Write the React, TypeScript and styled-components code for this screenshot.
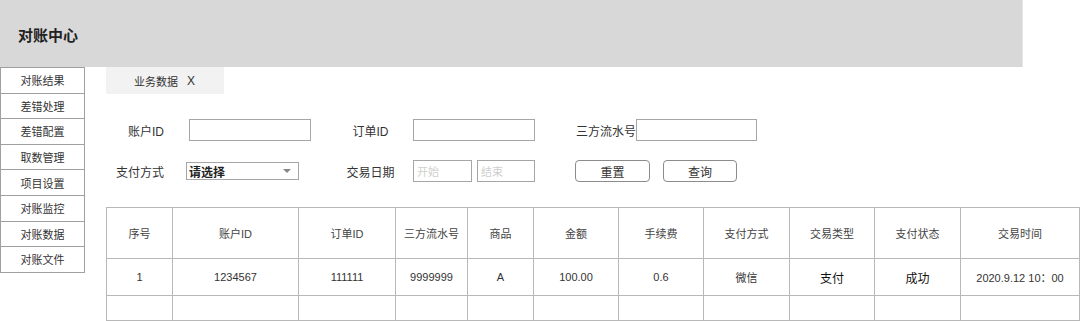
import styled, { createGlobalStyle } from 'styled-components'

const menus = ['对账结果', '差错处理', '差错配置', '取数管理', '项目设置', '对账监控', '对账数据', '对账文件']

const columns = [
  { title: '序号', width: 66 },
  { title: '账户ID', width: 126 },
  { title: '订单ID', width: 97 },
  { title: '三方流水号', width: 72 },
  { title: '商品', width: 66 },
  { title: '金额', width: 85 },
  { title: '手续费', width: 85 },
  { title: '支付方式', width: 86 },
  { title: '交易类型', width: 85 },
  { title: '支付状态', width: 86 },
  { title: '交易时间', width: 119 },
]

const rows = [
  [
    { text: '1' },
    { text: '1234567' },
    { text: '111111' },
    { text: '9999999' },
    { text: 'A' },
    { text: '100.00' },
    { text: '0.6' },
    { text: '微信' },
    { text: '支付', strong: true },
    { text: '成功', strong: true },
    { text: '2020.9.12 10：00' },
  ],
]

export default function App() {
  return (
    <>
      <GlobalStyle />
      <Page>
        <Header>
          <Title>对账中心</Title>
        </Header>
        <Body>
          <Sidebar>
            {menus.map((m) => (
              <MenuItem key={m}>{m}</MenuItem>
            ))}
          </Sidebar>
          <Main>
            <TabBar>
              <Tab>
                业务数据<TabClose>X</TabClose>
              </Tab>
            </TabBar>

            <Form>
              <Label align="right">账户ID</Label>
              <Cell>
                <Input offset={3} width={122} />
              </Cell>
              <Label align="center">订单ID</Label>
              <Cell>
                <Input width={122} />
              </Cell>
              <Cell offset={16}>
                <InlineLabel>三方流水号</InlineLabel>
                <Input width={121} />
              </Cell>

              <Label align="right">支付方式</Label>
              <Cell>
                <Select>
                  请选择
                  <Caret />
                </Select>
              </Cell>
              <Label align="center">交易日期</Label>
              <Cell gap={5}>
                <Input width={59}>
                  <Placeholder>开始</Placeholder>
                </Input>
                <Input width={58}>
                  <Placeholder>结束</Placeholder>
                </Input>
              </Cell>
              <Cell offset={15} gap={13}>
                <Button width={75}>重置</Button>
                <Button width={74}>查询</Button>
              </Cell>
            </Form>

            <Table>
              <colgroup>
                {columns.map((c) => (
                  <col key={c.title} style={{ width: c.width }} />
                ))}
              </colgroup>
              <thead>
                <tr>
                  {columns.map((c) => (
                    <Th key={c.title}>{c.title}</Th>
                  ))}
                </tr>
              </thead>
              <tbody>
                {rows.map((r, i) => (
                  <DataRow key={i}>
                    {r.map((c, j) => (
                      <Td key={j} strong={c.strong}>
                        {c.text}
                      </Td>
                    ))}
                  </DataRow>
                ))}
                <EmptyRow>
                  {columns.map((c) => (
                    <Td key={c.title} />
                  ))}
                </EmptyRow>
              </tbody>
            </Table>
          </Main>
        </Body>
      </Page>
    </>
  )
}

const GlobalStyle = createGlobalStyle`
  html, body {
    margin: 0;
    padding: 0;
    background: #fff;
  }
  body {
    font-family: "Liberation Sans", "Noto Sans CJK SC", sans-serif;
    color: #333;
  }
`

const Page = styled.div`
  width: 1080px;
  height: 321px;
  overflow: hidden;
`

const Header = styled.div`
  width: 1023px;
  height: 67px;
  background: #d8d8d8;
  border-right: 1px solid #e6e6e6;
  display: flex;
  align-items: center;
  padding-left: 18px;
  box-sizing: border-box;
`

const Title = styled.div`
  font-size: 15px;
  font-weight: 700;
  color: #222;
  margin-top: 1px;
`

const Body = styled.div`
  display: flex;
  align-items: flex-start;
`

const Sidebar = styled.div`
  width: 85px;
  box-sizing: border-box;
  border: 1px solid #a0a0a0;
  border-bottom: none;
  flex-shrink: 0;
`

const MenuItem = styled.div`
  height: 24.6px;
  border-bottom: 1px solid #a0a0a0;
  display: flex;
  align-items: center;
  justify-content: center;
  font-size: 11px;
  color: #333;
`

const Main = styled.div`
  flex: 1;
  padding-left: 21px;
`

const TabBar = styled.div`
  display: flex;
`

const Tab = styled.div`
  width: 118px;
  height: 27px;
  background: #f2f2f2;
  display: flex;
  align-items: center;
  padding-left: 28px;
  box-sizing: border-box;
  font-size: 11px;
  color: #333;
`

const TabClose = styled.span`
  margin-left: 9px;
  font-size: 12px;
`

const Form = styled.div`
  display: grid;
  grid-template-columns: 80px 154px 73px 147px auto;
  grid-auto-rows: 22px;
  row-gap: 19px;
  margin-top: 25px;
  align-items: center;
`

const Label = styled.div<{ align: 'right' | 'center' }>`
  font-size: 12px;
  color: #333;
  text-align: ${({ align }) => align};
  padding-right: ${({ align }) => (align === 'right' ? '22px' : '12px')};
  white-space: nowrap;
`

const InlineLabel = styled.span`
  font-size: 12px;
  color: #333;
  white-space: nowrap;
`

const Cell = styled.div<{ offset?: number; gap?: number }>`
  display: flex;
  align-items: center;
  padding-left: ${({ offset }) => offset || 0}px;
  gap: ${({ gap }) => gap || 0}px;
  height: 22px;
`

const Input = styled.div<{ width: number; offset?: number }>`
  width: ${({ width }) => width}px;
  height: 22px;
  margin-left: ${({ offset }) => offset || 0}px;
  border: 1px solid #a6a6a6;
  box-sizing: border-box;
  display: flex;
  align-items: center;
  padding-left: 3px;
`

const Placeholder = styled.span`
  font-size: 11px;
  color: #cfcfcf;
`

const Select = styled.div`
  width: 113px;
  height: 18px;
  border: 1px solid #a6a6a6;
  box-sizing: border-box;
  display: flex;
  align-items: center;
  justify-content: space-between;
  padding: 0 7px 0 2px;
  font-size: 12px;
  font-weight: 700;
  color: #222;
`

const Caret = styled.span`
  width: 0;
  height: 0;
  border-left: 4px solid transparent;
  border-right: 4px solid transparent;
  border-top: 4px solid #888;
`

const Button = styled.div<{ width: number }>`
  width: ${({ width }) => width}px;
  height: 22px;
  border: 1px solid #8c8c8c;
  border-radius: 4px;
  box-sizing: border-box;
  display: flex;
  align-items: center;
  justify-content: center;
  font-size: 12px;
  color: #333;
`

const Table = styled.table`
  margin-top: 25px;
  border-collapse: collapse;
  table-layout: fixed;
  width: 974px;
  border: 1px solid #b8b8b8;
`

const Th = styled.th`
  height: 50px;
  border: 1px solid #b8b8b8;
  font-size: 11px;
  font-weight: 400;
  color: #444;
  text-align: center;
  padding: 0;
`

const DataRow = styled.tr`
  height: 37px;
`

const EmptyRow = styled.tr`
  height: 25px;
`

const Td = styled.td<{ strong?: boolean }>`
  border: 1px solid #b8b8b8;
  font-size: ${({ strong }) => (strong ? '12px' : '11px')};
  font-weight: 400;
  color: ${({ strong }) => (strong ? '#111' : '#333')};
  text-align: center;
  padding: 0;
  white-space: nowrap;
`
